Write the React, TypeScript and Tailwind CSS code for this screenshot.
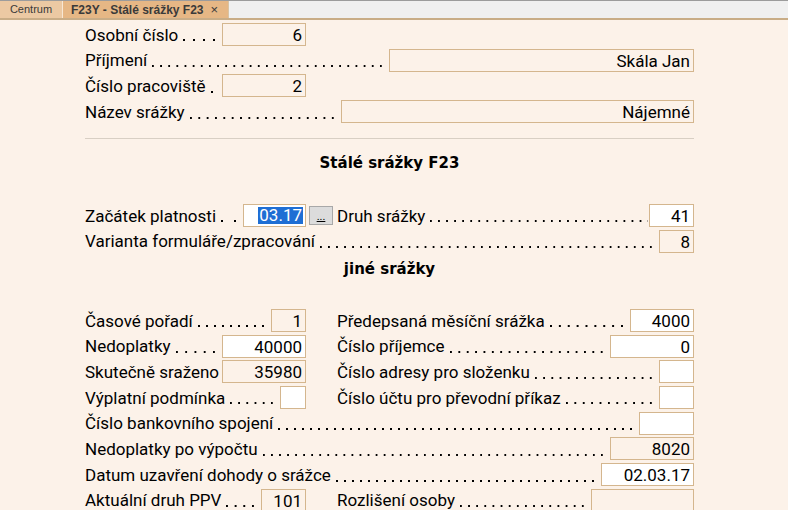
import React from "react";

const FONT = { fontFamily: 'Roboto, "DejaVu Sans", sans-serif' };
const HEAD = { fontFamily: '"DejaVu Sans", sans-serif' };

function Dots() {
  return (
    <span className="ml-[5px] mr-[1px] h-[2px] min-w-0 flex-1 translate-y-[6px] bg-[linear-gradient(to_right,#000_2px,transparent_2px)] bg-[length:8px_2px] bg-left bg-repeat-space" />
  );
}

function Box({ w, value, white }: { w: string; value?: string; white?: boolean }) {
  return (
    <div
      className={
        w +
        " flex h-[23px] shrink-0 items-center justify-end overflow-hidden border border-[#d4b68e] pr-[3px] leading-none " +
        (white ? "bg-white" : "bg-[#fcf2e9]")
      }
    >
      <span className="translate-y-[1px]">{value}</span>
    </div>
  );
}

function Field({
  label,
  w,
  value,
  white,
  dots = true,
}: {
  label: string;
  w: string;
  value?: string;
  white?: boolean;
  dots?: boolean;
}) {
  return (
    <div className="flex h-[25.7px] w-full min-w-0 items-center">
      <span className="shrink-0 translate-y-[1px] whitespace-nowrap">{label}</span>
      {dots ? <Dots /> : <span className="min-w-0 flex-1" />}
      <Box w={w} value={value} white={white} />
    </div>
  );
}

export default function App() {
  return (
    <div className="h-screen overflow-hidden bg-[#fcf2e9] text-[17px] text-black" style={FONT}>
      {/* tab bar */}
      <div className="flex h-[20px] border-t border-b-2 border-t-[#9c9c9c] border-b-[#c9ad87] bg-[#f0f0f0]">
        <div
          className="flex w-[62px] items-center justify-center bg-[#ecc9a3] text-[11px] text-[#3a3a3a]"
          style={{ fontFamily: '"Liberation Sans", sans-serif' }}
        >
          Centrum
        </div>
        <div className="w-px bg-[#f7e7d4]" />
        <div
          className="flex w-[165px] items-center gap-[7px] bg-[#e6b785] pl-[8px] text-[12px] font-bold text-[#3a3a3a]"
          style={{ fontFamily: '"Liberation Sans", sans-serif' }}
        >
          <span>F23Y - Stálé srážky F23</span>
          <span className="text-[13px] font-normal">×</span>
        </div>
        <div className="w-px bg-[#d9c3a3]" />
      </div>

      <div className="ml-[85px] w-[609px] pt-[1.65px]">
        <div className="w-[221px]">
          <Field label="Osobní číslo" w="w-[84px]" value="6" />
        </div>
        <Field label="Příjmení" w="w-[305px]" value="Skála Jan" />
        <div className="w-[221px]">
          <Field label="Číslo pracoviště" w="w-[84px]" value="2" />
        </div>
        <Field label="Název srážky" w="w-[353px]" value="Nájemné" />

        <div className="mt-[13.5px] border-t border-[#d8cfc4]" />

        <div className="mt-[14px] h-[20px] text-center text-[15px] font-bold leading-[20px]" style={HEAD}>
          Stálé srážky F23
        </div>

        <div className="mt-[29.65px] flex h-[25.7px] items-center">
          <div className="flex w-[221px] items-center">
            <span className="shrink-0 translate-y-[1px] whitespace-nowrap">Začátek platnosti</span>
            <Dots />
            <div className="flex h-[23px] w-[63px] shrink-0 items-center justify-end overflow-hidden border border-[#d4b68e] bg-white pr-[2px] leading-none">
              <span className="flex h-[17px] items-center bg-[#1e6ed4] px-[1px] text-white">03.17</span>
            </div>
          </div>
          <div className="ml-[3px] flex h-[19px] w-[24px] shrink-0 items-end justify-center border border-[#a8a8a8] bg-[#dcdcdc] pb-[2px] text-[11px] leading-none underline">
            ...
          </div>
          <div className="ml-[4px] flex min-w-0 flex-1">
            <Field label="Druh srážky" w="w-[45px]" value="41" white />
          </div>
        </div>
        <Field label="Varianta formuláře/zpracování" w="w-[35px]" value="8" />

        <div className="mt-[5px] h-[20px] text-center text-[15px] font-bold leading-[20px]" style={HEAD}>
          jiné srážky
        </div>

        <div className="mt-[28.65px] flex">
          <div className="flex w-[221px] flex-col">
            <Field label="Časové pořadí" w="w-[35px]" value="1" />
            <Field label="Nedoplatky" w="w-[84px]" value="40000" white />
            <Field label="Skutečně sraženo" w="w-[84px]" value="35980" dots={false} />
            <Field label="Výplatní podmínka" w="w-[26px]" white />
          </div>
          <div className="ml-[31px] flex w-[357px] flex-col">
            <Field label="Předepsaná měsíční srážka" w="w-[64px]" value="4000" white />
            <Field label="Číslo příjemce" w="w-[84px]" value="0" white />
            <Field label="Číslo adresy pro složenku" w="w-[35px]" white />
            <Field label="Číslo účtu pro převodní příkaz" w="w-[35px]" white />
          </div>
        </div>

        <Field label="Číslo bankovního spojení" w="w-[55px]" white />
        <Field label="Nedoplatky po výpočtu" w="w-[84px]" value="8020" />
        <Field label="Datum uzavření dohody o srážce" w="w-[93px]" value="02.03.17" white />
        <div className="flex">
          <div className="w-[221px]">
            <Field label="Aktuální druh PPV" w="w-[45px]" value="101" />
          </div>
          <div className="ml-[31px] w-[357px]">
            <Field label="Rozlišení osoby" w="w-[103px]" />
          </div>
        </div>
      </div>
    </div>
  );
}
